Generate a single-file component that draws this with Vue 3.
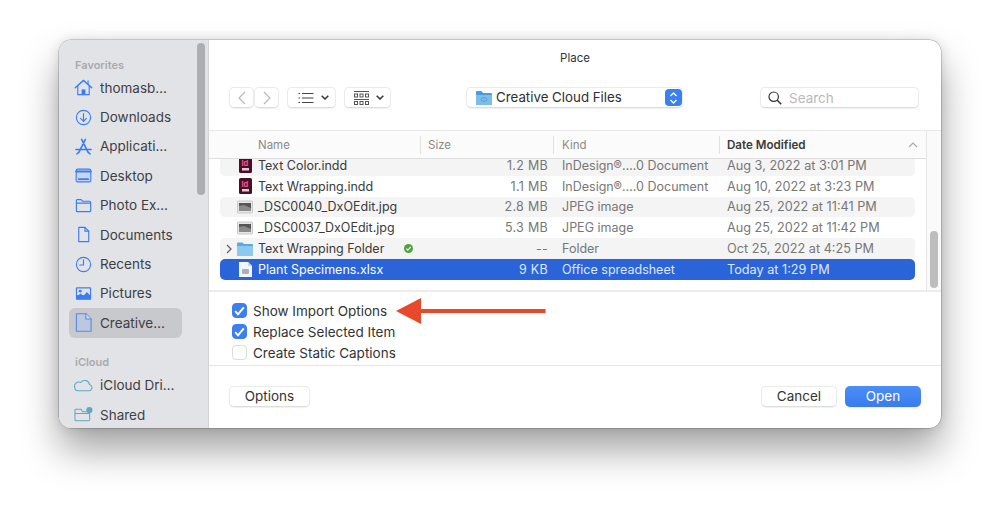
<script setup>
const favorites = [
  { name: 'thomasb…', icon: 'home' },
  { name: 'Downloads', icon: 'download' },
  { name: 'Applicati…', icon: 'apps' },
  { name: 'Desktop', icon: 'desktop' },
  { name: 'Photo Ex…', icon: 'folder' },
  { name: 'Documents', icon: 'doc' },
  { name: 'Recents', icon: 'clock' },
  { name: 'Pictures', icon: 'pictures' },
  { name: 'Creative…', icon: 'cc', active: true },
]
const cloud = [
  { name: 'iCloud Dri…', icon: 'cloud' },
  { name: 'Shared', icon: 'shared' },
]
const files = [
  { name: 'Text Color.indd', size: '1.2 MB', kind: 'InDesign®….0 Document', date: 'Aug 3, 2022 at 3:01 PM', type: 'indd' },
  { name: 'Text Wrapping.indd', size: '1.1 MB', kind: 'InDesign®….0 Document', date: 'Aug 10, 2022 at 3:23 PM', type: 'indd' },
  { name: '_DSC0040_DxOEdit.jpg', size: '2.8 MB', kind: 'JPEG image', date: 'Aug 25, 2022 at 11:41 PM', type: 'jpg' },
  { name: '_DSC0037_DxOEdit.jpg', size: '5.3 MB', kind: 'JPEG image', date: 'Aug 25, 2022 at 11:42 PM', type: 'jpg' },
  { name: 'Text Wrapping Folder', size: '--', kind: 'Folder', date: 'Oct 25, 2022 at 4:25 PM', type: 'folder' },
  { name: 'Plant Specimens.xlsx', size: '9 KB', kind: 'Office spreadsheet', date: 'Today at 1:29 PM', type: 'xlsx', selected: true },
]
const options = [
  { label: 'Show Import Options', checked: true },
  { label: 'Replace Selected Item', checked: true },
  { label: 'Create Static Captions', checked: false },
]
</script>

<template>
  <div class="page">
    <div class="window">
      <aside class="sidebar">
        <div class="thumb-side"></div>
        <div class="side-label first">Favorites</div>
        <div v-for="f in favorites" :key="f.name" class="side-row" :class="{ active: f.active }">
          <svg class="side-icon" viewBox="0 0 20 20" fill="none" stroke="#3b7cf6" stroke-width="1.200" stroke-linejoin="round" stroke-linecap="round">
            <template v-if="f.icon === 'home'">
              <path d="M1.300 10.300 10 2.500 18.700 10.300" stroke-width="1.500"/>
              <path d="M4 8.500V17.500H16V8.500"/>
              <path d="M14.800 3V6.500"/>
              <rect x="8" y="12" width="4" height="5.500" fill="#3b7cf6" stroke="none"/>
            </template>
            <template v-else-if="f.icon === 'download'">
              <circle cx="10" cy="10" r="7.500"/>
              <path d="M10 5.800V14M7 11 10 14 13 11"/>
            </template>
            <template v-else-if="f.icon === 'apps'">
              <path d="M8 2.500 15 16.500M12 2.500 5 16.500M2 13.200H18" stroke-width="1.700"/>
              <path d="M3 17.800 4.600 16.300M17 17.800 15.400 16.300" stroke-width="1.500"/>
            </template>
            <template v-else-if="f.icon === 'desktop'">
              <rect x="2.300" y="3.300" width="15.400" height="13.400" rx="1.500" fill="#c9d6f0"/>
              <path d="M2.300 5.800H17.700" stroke-width="2"/>
              <path d="M5 13.800H15" stroke-width="2"/>
            </template>
            <template v-else-if="f.icon === 'folder'">
              <path d="M2.500 6V15.500A1 1 0 0 0 3.500 16.500H16.500A1 1 0 0 0 17.500 15.500V6.500A1 1 0 0 0 16.500 5.500H9L7.500 3.800H3.500A1 1 0 0 0 2.500 4.800Z"/>
              <path d="M2.500 7.500H17.500"/>
            </template>
            <template v-else-if="f.icon === 'doc'">
              <path d="M5 2.500H11.500L15.500 6.500V17.500H5Z"/>
              <path d="M11.500 2.500V6.500H15.500"/>
            </template>
            <template v-else-if="f.icon === 'clock'">
              <circle cx="10" cy="10" r="7.500"/>
              <path d="M10 5V10.500H6"/>
            </template>
            <template v-else-if="f.icon === 'pictures'">
              <rect x="2" y="3.500" width="16" height="13" rx="1" fill="#3b7cf6" stroke="none"/>
              <rect x="3.200" y="4.700" width="13.600" height="7" fill="#e2e3e7" stroke="none"/>
              <circle cx="6.500" cy="7.500" r="1.500" fill="#3b7cf6" stroke="none"/>
              <path d="M2.500 13.500 7 10 10 12.500 13.500 8.500 17.500 12.500V16H2.500Z" fill="#3b7cf6" stroke="none"/>
            </template>
            <template v-else>
              <path d="M2.500 .8H12.500L18 6.300V19.200H2.500Z" fill="#bcc8e0" stroke="#5b8be0"/>
              <path d="M12.500 .8V6.300H18" fill="#d4dcec" stroke="#5b8be0"/>
            </template>
          </svg>
          <span class="side-text">{{ f.name }}</span>
        </div>
        <div class="side-label second">iCloud</div>
        <div v-for="f in cloud" :key="f.name" class="side-row">
          <svg class="side-icon" viewBox="0 0 20 20" fill="none" stroke="#5fa9c4" stroke-width="1.100" stroke-linejoin="round">
            <path v-if="f.icon === 'cloud'" d="M4.500 15.500H15.500A3.300 3.300 0 0 0 16.300 9 5.200 5.200 0 0 0 7 6.800 4.500 4.500 0 0 0 .8 12.300 3.500 3.500 0 0 0 4.500 15.500Z"/>
            <template v-else>
              <path d="M1 5.500V15.500A1 1 0 0 0 2 16.500H15.500A1 1 0 0 0 16.500 15.500V7H9L7.500 4.500H2A1 1 0 0 0 1 5.500Z"/>
              <path d="M1 9H16.500"/>
              <circle cx="16.200" cy="5.300" r="3.300" fill="#5fa9c4" stroke="none"/>
            </template>
          </svg>
          <span class="side-text">{{ f.name }}</span>
        </div>
      </aside>

      <main class="main">
        <div class="title">Place</div>
        <div class="toolbar">
          <div class="nav">
            <button class="btn nav-btn">
              <svg width="8" height="14" viewBox="0 0 8 14" fill="none" stroke="#b9b9b9" stroke-width="1.200"><path d="M7 1 1 7 7 13"/></svg>
            </button>
            <button class="btn nav-btn">
              <svg width="8" height="14" viewBox="0 0 8 14" fill="none" stroke="#b9b9b9" stroke-width="1.200"><path d="M1 1 7 7 1 13"/></svg>
            </button>
          </div>
          <button class="btn view-btn">
            <svg width="16" height="12" viewBox="0 0 16 12" stroke="#444" stroke-width="1.100"><path d="M4 1.500H15.500M4 6H15.500M4 10.500H15.500M0.500 1.500H2M0.500 6H2M0.500 10.500H2"/></svg>
            <svg class="chev" width="8" height="5" viewBox="0 0 8 5" fill="none" stroke="#333" stroke-width="1.500"><path d="M.7.7 4 4 7.300.7"/></svg>
          </button>
          <button class="btn group-btn">
            <svg width="15" height="14" viewBox="0 0 15 14" fill="none" stroke="#555" stroke-width="1"><path d="M0 .5H15M0 8.500H15"/><rect x=".5" y="3" width="3" height="3"/><rect x="6" y="3" width="3" height="3"/><rect x="11.500" y="3" width="3" height="3"/><rect x=".5" y="10.500" width="3" height="3"/><rect x="6" y="10.500" width="3" height="3"/><rect x="11.500" y="10.500" width="3" height="3"/></svg>
            <svg class="chev" width="8" height="5" viewBox="0 0 8 5" fill="none" stroke="#333" stroke-width="1.500"><path d="M.7.7 4 4 7.300.7"/></svg>
          </button>
          <button class="btn popup">
            <svg width="16" height="15" viewBox="0 0 16 15"><path d="M0 2A1 1 0 0 1 1 1H5.500L7 3H15A1 1 0 0 1 16 4V14A1 1 0 0 1 15 15H1A1 1 0 0 1 0 14Z" fill="#4d9bd6"/><path d="M0 5H16V14A1 1 0 0 1 15 15H1A1 1 0 0 1 0 14Z" fill="#7dbde9"/><ellipse cx="8" cy="9.500" rx="3" ry="1.800" fill="none" stroke="#4d9bd6" stroke-width=".8"/></svg>
            <span class="popup-text">Creative Cloud Files</span>
            <span class="stepper">
              <svg width="9" height="14" viewBox="0 0 9 14" fill="none" stroke="#fff" stroke-width="1.400"><path d="M1.500 5 4.500 2 7.500 5M1.500 9 4.500 12 7.500 9"/></svg>
            </span>
          </button>
          <div class="btn search">
            <svg width="14" height="14" viewBox="0 0 14 14" fill="none" stroke="#333" stroke-width="1.200"><circle cx="5.700" cy="5.700" r="4.700"/><path d="M9.200 9.200 13.200 13.200" stroke-width="1.500"/></svg>
            <span class="search-text">Search</span>
          </div>
        </div>

        <div class="browser">
          <div class="table">
            <div class="thead">
              <div class="th name-col">Name</div>
              <div class="th size-col">Size</div>
              <div class="th kind-col">Kind</div>
              <div class="th date-col">
                <strong>Date Modified</strong>
                <svg width="10" height="6" viewBox="0 0 10 6" fill="none" stroke="#aaa" stroke-width="1.100"><path d="M1 5 5 1 9 5"/></svg>
              </div>
            </div>
            <div class="tbody">
              <div class="rows">
                <div v-for="(r, i) in files" :key="r.name" class="row" :class="{ odd: i % 2 === 0, selected: r.selected }">
                  <div class="cell name-cell">
                    <svg v-if="r.type === 'folder'" class="disclosure" width="6" height="10" viewBox="0 0 6 10" fill="none" stroke="#666" stroke-width="1.300"><path d="M1 1 5 5 1 9"/></svg>
                    <span class="file-icon">
                      <svg v-if="r.type === 'indd'" width="13" height="16" viewBox="0 0 13 16"><rect width="13" height="16" rx="1.500" fill="#4a0f27"/><text x="2.500" y="8.500" font-size="7.500" font-weight="700" fill="#ff4f8a" font-family="Inter">Id</text><rect x="3" y="11" width="7" height="2.500" fill="#d9cdd2"/></svg>
                      <svg v-else-if="r.type === 'jpg'" width="16" height="14" viewBox="0 0 16 14"><rect x=".5" y="1" width="15" height="12" rx="1" fill="#e6e6e6" stroke="#c8c8c8"/><rect x="2" y="3" width="12" height="8" fill="#555"/><path d="M2 6 7 5 14 8V11H2Z" fill="#8a8a8a"/></svg>
                      <svg v-else-if="r.type === 'folder'" width="16" height="14" viewBox="0 0 16 14"><path d="M0 1.500A1 1 0 0 1 1 .5H5.500L7 2H15A1 1 0 0 1 16 3V13A1 1 0 0 1 15 14H1A1 1 0 0 1 0 13Z" fill="#5aaae0"/><path d="M0 4H16V13A1 1 0 0 1 15 14H1A1 1 0 0 1 0 13Z" fill="#8cc9f0"/></svg>
                      <svg v-else width="13" height="15" viewBox="0 0 13 15"><path d="M0 0H9L13 4V15H0Z" fill="#f4f5f7"/><path d="M9 0V4H13" fill="#cfd3da"/><rect x="3" y="7" width="7" height="5" rx="1" fill="#a9b0bd"/></svg>
                    </span>
                    <span class="file-name">{{ r.name }}</span>
                    <svg v-if="r.type === 'folder'" class="sync" width="9" height="9" viewBox="0 0 9 9"><circle cx="4.500" cy="4.500" r="4.500" fill="#4ea23f"/><path d="M2.300 4.600 3.900 6.100 6.700 3" fill="none" stroke="#fff" stroke-width="1.200"/></svg>
                  </div>
                  <div class="cell size-cell">{{ r.size }}</div>
                  <div class="cell kind-cell">{{ r.kind }}</div>
                  <div class="cell date-cell">{{ r.date }}</div>
                </div>
              </div>
            </div>
          </div>
          <div class="track"><div class="thumb"></div></div>
        </div>

        <div class="options">
          <label v-for="o in options" :key="o.label" class="opt">
            <span class="box" :class="{ on: o.checked }">
              <svg v-if="o.checked" width="11" height="10" viewBox="0 0 11 10" fill="none" stroke="#fff" stroke-width="2"><path d="M1.200 5.200 4 8.300 9.800 1.300"/></svg>
            </span>
            {{ o.label }}
          </label>
        </div>

        <div class="footer">
          <button class="btn act">Options</button>
          <div class="footer-right">
            <button class="btn act cancel">Cancel</button>
            <button class="btn act open">Open</button>
          </div>
        </div>
      </main>
    </div>

    <svg class="arrow" width="150" height="28" viewBox="0 0 150 28">
      <path d="M25 12H149.500V16H25Z" fill="#e8492b"/>
      <path d="M0 14 25 1V27Z" fill="#e8492b"/>
    </svg>
  </div>
</template>

<style>
html, body { margin: 0; background: #fff; }
</style>

<style scoped>
.page {
  position: relative;
  width: 1000px;
  height: 506px;
  padding: 40px 59px 78px;
  box-sizing: border-box;
  background: #fff;
  overflow: hidden;
  font-family: Inter, "Liberation Sans", sans-serif;
  font-size: 13px;
  color: #3a3a3a;
}
.window {
  display: flex;
  height: 388px;
  border-radius: 12px;
  overflow: hidden;
  background: #fff;
  box-shadow: 0 22px 38px rgba(0, 0, 0, .36), 0 0 12px rgba(0, 0, 0, .12), 0 0 0 .5px rgba(0, 0, 0, .3);
}
.sidebar {
  position: relative;
  flex: 0 0 150px;
  box-sizing: border-box;
  padding: 0 10px;
  background: #e2e3e7;
  border-right: 1px solid #d4d4d6;
  overflow: hidden;
}
.thumb-side {
  position: absolute;
  left: 138px;
  top: 3px;
  width: 8px;
  height: 152px;
  border-radius: 4px;
  background: #adaeb1;
}
.side-label {
  font-size: 11px;
  font-weight: 600;
  color: #a9aaae;
  padding-left: 6px;
  line-height: 14px;
}
.side-label.first { margin-top: 18px; margin-bottom: 1px; }
.side-label.second { margin-top: 17px; margin-bottom: 2px; }
.side-row {
  display: flex;
  align-items: center;
  width: 113px;
  height: 29.400px;
  padding-left: 5px;
  box-sizing: border-box;
  border-radius: 6px;
  color: #3f3f42;
  white-space: nowrap;
}
.side-row.active { background: #c8c9cd; }
.side-icon { width: 19px; height: 19px; flex: none; }
.side-text { margin-left: 7px; font-size: 13.500px; }
.main {
  flex: 1;
  display: flex;
  flex-direction: column;
  min-width: 0;
}
.title {
  height: 36px;
  line-height: 36px;
  text-align: center;
  font-size: 11.500px;
  color: #333;
}
.toolbar {
  display: flex;
  align-items: center;
  height: 21px;
  margin-top: 11px;
  padding-left: 20px;
}
.btn {
  display: flex;
  align-items: center;
  box-sizing: border-box;
  height: 21px;
  margin: 0;
  padding: 0;
  background: #fff;
  border: 1px solid #ebebeb;
  border-bottom-color: #dcdcdc;
  border-radius: 5px;
  box-shadow: 0 .5px 1px rgba(0, 0, 0, .06);
  font: inherit;
  color: #333;
}
.nav { display: flex; }
.nav-btn { width: 25px; justify-content: center; }
.view-btn { width: 49px; margin-left: 8px; padding-left: 10px; }
.group-btn { width: 47px; margin-left: 8px; padding-left: 9px; }
.chev { margin-left: 7px; }
.popup { width: 217px; margin-left: 75px; padding-left: 9px; padding-bottom: 1px; position: relative; }
.popup-text { margin-left: 4px; font-size: 13.300px; color: #2e2e2e; }
.stepper {
  position: absolute;
  right: 0;
  top: 1px;
  width: 17px;
  height: 17px;
  border-radius: 4px;
  background: #3b7ff0;
  display: flex;
  align-items: center;
  justify-content: center;
}
.search { width: 159px; margin-left: 77px; padding-left: 7px; }
.search-text { margin-left: 7px; font-size: 13.500px; color: #b9b9b9; }
.browser {
  display: flex;
  height: 162px;
  margin-top: 22px;
  border-top: 1px solid #e8e8e8;
  border-bottom: 2px solid #ececec;
  box-sizing: border-box;
}
.table { flex: 1; min-width: 0; display: flex; flex-direction: column; }
.thead {
  display: flex;
  flex: 0 0 28px;
  box-sizing: border-box;
  background: #fbfbfb;
  border-bottom: 1px solid #dedede;
  font-size: 11.500px;
  color: #8a8a8a;
  align-items: center;
}
.thead strong { font-weight: 600; color: #3a3a3a; font-size: 11.600px; }
.th { height: 18px; line-height: 18px; box-sizing: border-box; }
.name-col { width: 211px; padding-left: 49px; }
.size-col { width: 133px; padding-left: 7px; border-left: 1px solid #e2e2e2; }
.kind-col { width: 166px; padding-left: 8px; border-left: 1px solid #e2e2e2; }
.date-col {
  width: 207px;
  padding: 0 8px 0 7px;
  border-left: 1px solid #e2e2e2;
  display: flex;
  justify-content: space-between;
  align-items: center;
  box-sizing: border-box;
}
.date-col svg { margin-left: auto; }
.tbody { flex: 1; overflow: hidden; padding: 0 2px 0 11px; }
.rows { margin-top: -4px; width: 695px; }
.row {
  display: flex;
  align-items: center;
  height: 20.800px;
  border-radius: 5px;
  font-size: 12.500px;
  color: #777;
  white-space: nowrap;
}
.row.odd { background: #f4f4f4; }
.row.selected { background: #2a64d8; color: #dfe8fb; }
.cell { box-sizing: border-box; }
.name-cell { position: relative; display: flex; align-items: center; width: 200px; padding-left: 18px; color: #3a3a3a; }
.selected .name-cell { color: #fff; }
.disclosure { position: absolute; left: 6px; top: 3px; }
.file-icon { position: absolute; left: 17px; width: 16px; display: flex; justify-content: center; }
.file-name { margin-left: 20px; }
.sync { margin-left: 20px; }
.size-cell { width: 128px; text-align: right; letter-spacing: .3px; }
.kind-cell { width: 179px; padding-left: 14px; }
.date-cell { font-size: 12.700px; }
.track {
  flex: 0 0 15px;
  box-sizing: border-box;
  background: #fafafa;
  border-left: 1px solid #e6e6e6;
  position: relative;
}
.thumb {
  position: absolute;
  left: 3px;
  top: 100px;
  width: 8px;
  height: 57px;
  border-radius: 4px;
  background: #bdbdbd;
}
.options {
  display: flex;
  flex-direction: column;
  height: 74px;
  padding: 8px 0 0 23px;
  box-sizing: border-box;
  border-bottom: 1px solid #e4e4e4;
}
.opt {
  display: flex;
  align-items: center;
  height: 21px;
  font-size: 13.500px;
  color: #333;
}
.box {
  display: flex;
  align-items: center;
  justify-content: center;
  box-sizing: border-box;
  width: 15px;
  height: 15px;
  margin-right: 6px;
  border-radius: 4px;
  background: #fff;
  border: 1px solid #dcdcdc;
}
.box.on { background: #3d7ff1; border-color: #3d7ff1; }
.footer {
  display: flex;
  justify-content: space-between;
  padding: 20px 20px 0;
}
.footer-right { display: flex; gap: 8px; }
.act { justify-content: center; font-size: 13.500px; padding-bottom: 1px; }
.footer > .act { width: 81px; }
.cancel { width: 76px; }
.open { width: 76px; background: linear-gradient(#4b8ef6, #3a7bee); border: none; color: #fff; }
.arrow { position: absolute; left: 396px; top: 297px; }
</style>
